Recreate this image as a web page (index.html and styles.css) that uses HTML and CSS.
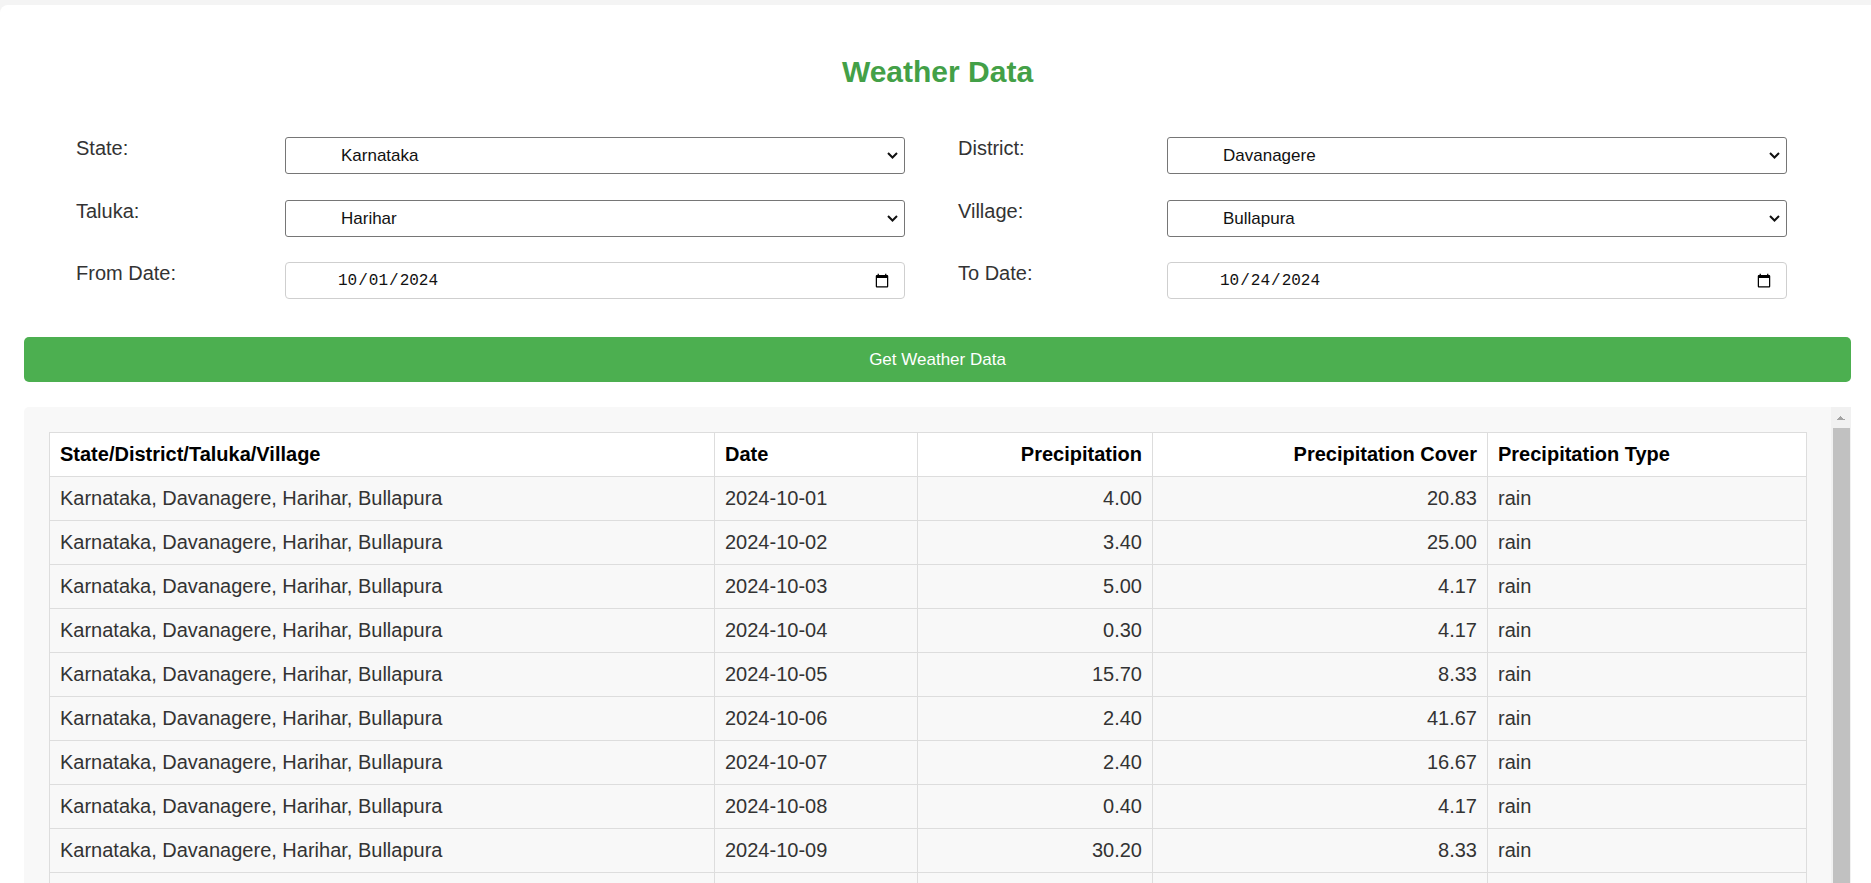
FILE: index.html
```html
<!DOCTYPE html>
<html lang="en">
<head>
<meta charset="utf-8">
<title>Weather Data</title>
<link rel="stylesheet" href="styles.css">
</head>
<body>
<div class="card">
  <h1 class="title">Weather Data</h1>
  <form class="filters">
    <div class="field">
      <label class="field-label">State:</label>
      <div class="select-box">
        <select class="field-select"><option>Karnataka</option></select>
        <svg class="chevron" width="11" height="7" viewBox="0 0 11 7"><path d="M1 1 L5.5 5.5 L10 1" fill="none" stroke="#111" stroke-width="2"/></svg>
      </div>
    </div>
    <div class="field">
      <label class="field-label">District:</label>
      <div class="select-box">
        <select class="field-select"><option>Davanagere</option></select>
        <svg class="chevron" width="11" height="7" viewBox="0 0 11 7"><path d="M1 1 L5.5 5.5 L10 1" fill="none" stroke="#111" stroke-width="2"/></svg>
      </div>
    </div>
    <div class="field">
      <label class="field-label">Taluka:</label>
      <div class="select-box">
        <select class="field-select"><option>Harihar</option></select>
        <svg class="chevron" width="11" height="7" viewBox="0 0 11 7"><path d="M1 1 L5.5 5.5 L10 1" fill="none" stroke="#111" stroke-width="2"/></svg>
      </div>
    </div>
    <div class="field">
      <label class="field-label">Village:</label>
      <div class="select-box">
        <select class="field-select"><option>Bullapura</option></select>
        <svg class="chevron" width="11" height="7" viewBox="0 0 11 7"><path d="M1 1 L5.5 5.5 L10 1" fill="none" stroke="#111" stroke-width="2"/></svg>
      </div>
    </div>
    <div class="field">
      <label class="field-label">From Date:</label>
      <input class="field-date" type="date" value="2024-10-01">
    </div>
    <div class="field">
      <label class="field-label">To Date:</label>
      <input class="field-date" type="date" value="2024-10-24">
    </div>
  </form>
  <button class="submit" type="button">Get Weather Data</button>
  <div class="table-wrap">
    <div class="table-area">
      <table class="data-table">
        <colgroup>
          <col class="c-loc"><col class="c-date"><col class="c-prec"><col class="c-cover"><col class="c-type">
        </colgroup>
        <thead>
          <tr><th>State/District/Taluka/Village</th><th>Date</th><th class="num">Precipitation</th><th class="num">Precipitation Cover</th><th>Precipitation Type</th></tr>
        </thead>
        <tbody>
          <tr><td>Karnataka, Davanagere, Harihar, Bullapura</td><td>2024-10-01</td><td class="num">4.00</td><td class="num">20.83</td><td>rain</td></tr>
          <tr><td>Karnataka, Davanagere, Harihar, Bullapura</td><td>2024-10-02</td><td class="num">3.40</td><td class="num">25.00</td><td>rain</td></tr>
          <tr><td>Karnataka, Davanagere, Harihar, Bullapura</td><td>2024-10-03</td><td class="num">5.00</td><td class="num">4.17</td><td>rain</td></tr>
          <tr><td>Karnataka, Davanagere, Harihar, Bullapura</td><td>2024-10-04</td><td class="num">0.30</td><td class="num">4.17</td><td>rain</td></tr>
          <tr><td>Karnataka, Davanagere, Harihar, Bullapura</td><td>2024-10-05</td><td class="num">15.70</td><td class="num">8.33</td><td>rain</td></tr>
          <tr><td>Karnataka, Davanagere, Harihar, Bullapura</td><td>2024-10-06</td><td class="num">2.40</td><td class="num">41.67</td><td>rain</td></tr>
          <tr><td>Karnataka, Davanagere, Harihar, Bullapura</td><td>2024-10-07</td><td class="num">2.40</td><td class="num">16.67</td><td>rain</td></tr>
          <tr><td>Karnataka, Davanagere, Harihar, Bullapura</td><td>2024-10-08</td><td class="num">0.40</td><td class="num">4.17</td><td>rain</td></tr>
          <tr><td>Karnataka, Davanagere, Harihar, Bullapura</td><td>2024-10-09</td><td class="num">30.20</td><td class="num">8.33</td><td>rain</td></tr>
          <tr><td>Karnataka, Davanagere, Harihar, Bullapura</td><td>2024-10-10</td><td class="num">1.20</td><td class="num">12.50</td><td>rain</td></tr>
          <tr><td>Karnataka, Davanagere, Harihar, Bullapura</td><td>2024-10-11</td><td class="num">0.00</td><td class="num">0.00</td><td></td></tr>
          <tr><td>Karnataka, Davanagere, Harihar, Bullapura</td><td>2024-10-12</td><td class="num">6.10</td><td class="num">12.50</td><td>rain</td></tr>
        </tbody>
      </table>
    </div>
    <div class="scrollbar" aria-hidden="true">
      <div class="scroll-up"></div>
      <div class="scroll-thumb"></div>
    </div>
  </div>
</div>
</body>
</html>
```
FILE: styles.css
```css
html, body {
  margin: 0;
  padding: 0;
  overflow: hidden;
  background: #f4f4f4;
  font-family: "Liberation Sans", Arial, sans-serif;
}

.card {
  margin-top: 5px;
  background: #ffffff;
  border-radius: 8px 0 0 0;
  padding: 50px 20px 0 24px;
}

.title {
  margin: 0;
  text-align: center;
  color: #43a047;
  font-size: 30px;
  line-height: 34px;
  font-weight: bold;
}

.filters {
  margin: 48px 0 0 52px;
  display: grid;
  grid-template-columns: 829px 829px;
  column-gap: 53px;
  row-gap: 25.5px;
}

.field {
  display: grid;
  grid-template-columns: 209px 620px;
  align-items: start;
}

.field-label {
  font-size: 20px;
  line-height: 23px;
  color: #333;
}

.select-box {
  position: relative;
  height: 37px;
}

.chevron {
  position: absolute;
  right: 7px;
  top: 15px;
  pointer-events: none;
}

.field-select,
.field-date {
  box-sizing: border-box;
  height: 37px;
  width: 100%;
  margin: 0;
  font-family: "Liberation Sans", Arial, sans-serif;
  font-size: 17px;
  color: #111;
  background: #fff;
}

.field-select {
  -webkit-appearance: none;
  appearance: none;
  border: 1px solid #767676;
  border-radius: 3px;
  padding: 0 24px 0 55px;
}

.field-date {
  border: 1px solid #cfcfcf;
  border-radius: 4px;
  padding: 1px 12px 0 51px;
  font-family: "Liberation Mono", "DejaVu Sans Mono", monospace;
  font-size: 16px;
}

.submit {
  display: block;
  box-sizing: border-box;
  width: 100%;
  height: 45px;
  margin-top: 38px;
  border: none;
  border-radius: 5px;
  background: #4caf50;
  color: #fff;
  font-family: "Liberation Sans", Arial, sans-serif;
  font-size: 17px;
}

.table-wrap {
  margin-top: 25px;
  background: #f8f8f8;
  border-radius: 5px 0 0 0;
  display: flex;
  height: 640px;
  overflow: hidden;
}

.table-area {
  flex: 1;
  min-width: 0;
  padding: 25px;
}

.scrollbar {
  width: 20px;
  flex: none;
  background: #f1f1f1;
  display: flex;
  flex-direction: column;
}

.scroll-up {
  height: 21px;
  flex: none;
  background-image:
    linear-gradient(to top left, #a3a3a3 50%, transparent 50%),
    linear-gradient(to top right, #a3a3a3 50%, transparent 50%);
  background-size: 4px 4px, 4px 4px;
  background-position: 6px 9px, 10px 9px;
  background-repeat: no-repeat;
}

.scroll-thumb {
  flex: 1;
  margin: 0 1px 0 2px;
  background: #c1c1c1;
}

.data-table {
  width: 100%;
  table-layout: fixed;
  border-collapse: collapse;
  font-size: 20px;
  line-height: 23px;
}

.c-loc { width: 665px; }
.c-date { width: 203px; }
.c-prec { width: 235px; }
.c-cover { width: 335px; }
.c-type { width: 319px; }

.data-table th,
.data-table td {
  border: 1px solid #dddddd;
  padding: 10px;
  text-align: left;
  white-space: nowrap;
}

.data-table th {
  background: #ffffff;
  color: #000;
  font-weight: bold;
}

.data-table td {
  background: #f8f8f8;
  color: #333;
}

.data-table .num {
  text-align: right;
}
```
